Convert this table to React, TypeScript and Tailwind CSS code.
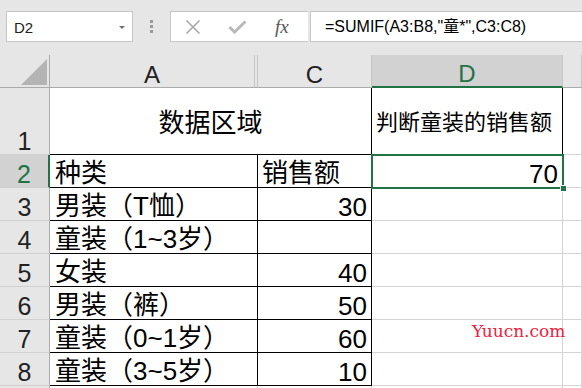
import React from "react";

type Row = { n: number; a: string; c: string };

const rows: Row[] = [
  { n: 3, a: "男装（T恤）", c: "30" },
  { n: 4, a: "童装（1~3岁）", c: "" },
  { n: 5, a: "女装", c: "40" },
  { n: 6, a: "男装（裤）", c: "50" },
  { n: 7, a: "童装（0~1岁）", c: "60" },
  { n: 8, a: "童装（3~5岁）", c: "10" },
];

const rowHead =
  "flex items-end justify-center bg-[#e6e6e6] border-r border-b border-r-[#ababab] border-b-[#d0d0d0] text-[25px] leading-none text-[#222]";
const colHead =
  "flex items-end justify-center bg-[#e6e6e6] border-r border-b border-r-[#c6c6c6] border-b-[#ababab] text-[24px] leading-none text-[#222]";
const tableCell = "bg-white border-r border-b border-black flex items-end leading-none text-[26px] text-black";
const gridCell = "bg-white border-r border-b border-[#d4d4d4]";

function Toolbar() {
  return (
    <div className="h-[55px] bg-[#e6e6e6] flex items-start pt-[11px]">
      {/* name box */}
      <div className="ml-[6px] w-[127px] h-[31px] bg-white border border-[#c6c6c6] flex items-center justify-between pl-[7px] pr-[7px] pt-[2px]">
        <span className="text-[15px] leading-none text-[#222]">D2</span>
        <span className="w-0 h-0 border-l-[3px] border-r-[3px] border-t-[3px] border-l-transparent border-r-transparent border-t-[#6e6e6e]" />
      </div>

      <div className="w-[37px] flex flex-col items-center gap-[2px] pt-[9px]">
        <span className="w-[3px] h-[3px] bg-[#9a9a9a]" />
        <span className="w-[3px] h-[3px] bg-[#9a9a9a]" />
        <span className="w-[3px] h-[3px] bg-[#9a9a9a]" />
      </div>

      {/* cancel / enter / insert function */}
      <div className="w-[138px] h-[31px] bg-white border border-[#c6c6c6] border-r-0 flex items-center">
        <svg width="16" height="16" viewBox="0 0 16 16" className="ml-[14px]">
          <path d="M1.5 1.5 L14.5 14.5 M14.5 1.5 L1.5 14.5" stroke="#a8a8a8" strokeWidth="1.6" fill="none" />
        </svg>
        <svg width="19" height="14" viewBox="0 0 19 14" className="ml-[27px]">
          <path d="M1.5 7 L6.5 12 L17.5 1.5" stroke="#b8b8b8" strokeWidth="3" fill="none" />
        </svg>
        <span className="ml-[28px] font-['Liberation_Serif',serif] italic text-[19px] leading-none text-[#555]">
          fx
        </span>
      </div>

      <div className="ml-[2px] flex-1 h-[31px] bg-white border border-[#c6c6c6] border-r-0 flex items-center pl-[14px] pt-[1px]">
        <span className="text-[16px] leading-none text-black">=SUMIF(A3:B8,"童*",C3:C8)</span>
      </div>
    </div>
  );
}

function Sheet() {
  return (
    <div className="h-[333px] overflow-hidden">
      <div className="grid grid-cols-[50px_205px_3px_114px_191px_1fr] grid-rows-[33px_67px_repeat(8,33px)]">
        {/* column headers */}
        <div className="relative bg-[#e6e6e6] border-r border-b border-r-[#ababab] border-b-[#ababab]">
          <svg width="27" height="27" viewBox="0 0 27 27" className="absolute left-[20px] top-[4px]">
            <polygon points="27,0 27,26 1,26" fill="#b4b4b4" />
          </svg>
        </div>
        <div className={colHead}>A</div>
        <div className="bg-[#e6e6e6] border-r border-b border-r-[#c6c6c6] border-b-[#ababab]" />
        <div className={colHead}>C</div>
        <div className="flex items-end justify-center bg-[#d2d2d2] border-r border-b-2 border-r-[#c6c6c6] border-b-[#217346] text-[24px] leading-none text-[#217346]">
          D
        </div>
        <div className={colHead} />

        {/* row 1: merged A1:C1 title */}
        <div className={rowHead}>1</div>
        <div className="col-span-3 bg-white border-r border-b border-black flex items-center justify-center pt-[4px] text-[26px] leading-none text-black">
          数据区域
        </div>
        <div className="bg-white border-r border-b border-black flex items-center pl-[4px] pt-[3px] text-[22px] leading-none text-black">
          判断童装的销售额
        </div>
        <div className={gridCell} />

        {/* row 2 */}
        <div className="flex items-end justify-center bg-[#d2d2d2] border-r-2 border-b border-r-[#217346] border-b-[#d0d0d0] text-[25px] leading-none text-[#217346]">
          2
        </div>
        <div className={`${tableCell} col-span-2 pl-[5px] pb-[1px]`}>种类</div>
        <div className={`${tableCell} pl-[4px] pb-[1px]`}>销售额</div>
        <div className="relative bg-white border-r border-b border-black flex items-end justify-end pr-[4px] text-[26px] leading-none text-black">
          70
          <div className="absolute -left-[1px] -top-[1px] -right-[2px] -bottom-[2px] border-2 border-[#217346]" />
          <div className="absolute -right-[5px] -bottom-[5px] w-[7px] h-[7px] bg-[#217346] border border-white" />
        </div>
        <div className={gridCell} />

        {/* rows 3-8 */}
        {rows.map((r) => (
          <React.Fragment key={r.n}>
            <div className={rowHead}>{r.n}</div>
            <div className={`${tableCell} col-span-2 pl-[5px] pb-[1px]`}>{r.a}</div>
            <div className={`${tableCell} justify-end pr-[4px]`}>{r.c}</div>
            <div className={gridCell} />
            <div className={gridCell} />
          </React.Fragment>
        ))}

        {/* row 9, only its top edge shows */}
        <div className="bg-[#e6e6e6] border-r border-r-[#ababab]" />
        <div className={`${gridCell} col-span-2`} />
        <div className={gridCell} />
        <div className={gridCell} />
        <div className={gridCell} />
      </div>
    </div>
  );
}

export default function App() {
  return (
    <div className="relative w-[582px] h-[388px] overflow-hidden bg-white font-['Liberation_Sans','Noto_Sans_CJK_SC',sans-serif]">
      <Toolbar />
      <Sheet />
      <span className="absolute left-[472px] top-[323px] font-['DejaVu_Serif',serif] text-[17px] leading-none text-[#f0203c]">
        Yuucn.com
      </span>
    </div>
  );
}
